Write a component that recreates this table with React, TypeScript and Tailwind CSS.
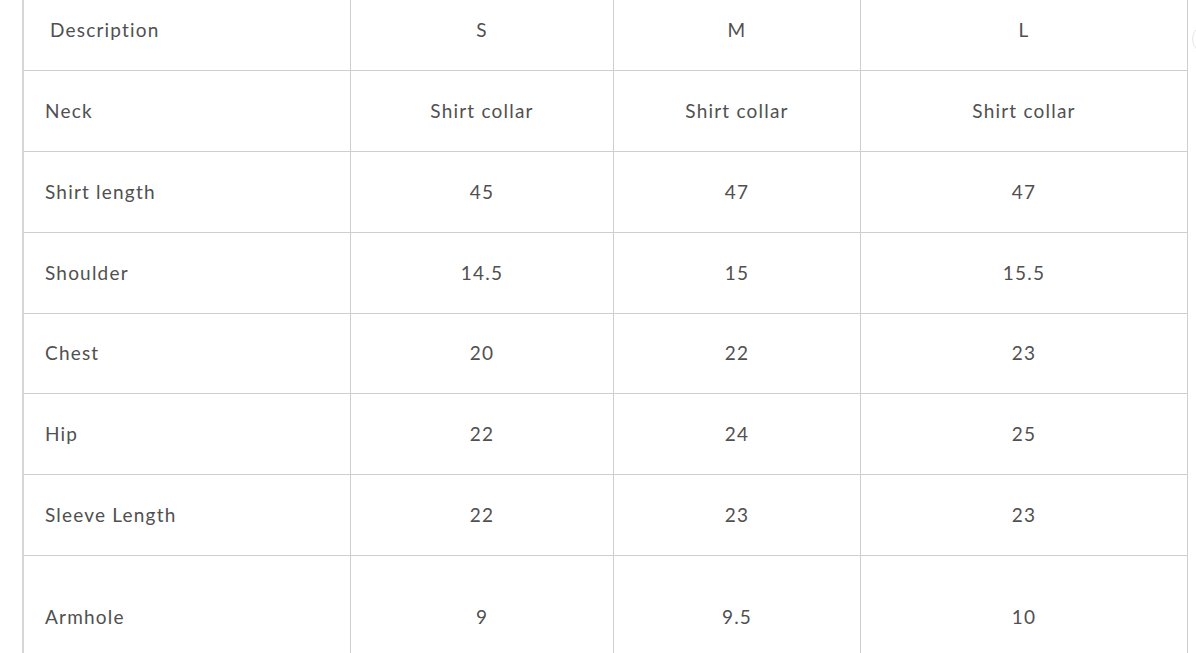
import React from "react";

const rows: [string, string, string, string, string][] = [
  ["Neck", "Shirt collar", "Shirt collar", "Shirt collar", "h-[81px]"],
  ["Shirt length", "45", "47", "47", "h-[81px]"],
  ["Shoulder", "14.5", "15", "15.5", "h-[81px]"],
  ["Chest", "20", "22", "23", "h-[80px]"],
  ["Hip", "22", "24", "25", "h-[81px]"],
  ["Sleeve Length", "22", "23", "23", "h-[81px]"],
];

export default function App() {
  return (
    <div
      className="relative w-[1196px] h-[653px] overflow-hidden bg-white text-[#505050]"
      style={{ fontFamily: 'Lato, "Noto Sans", sans-serif' }}
    >
      <div className="absolute left-[1192px] top-[24px] w-[30px] h-[30px] rounded-full border border-[#e6e6e6]" />
      <div className="ml-[22px] w-[1166px] border-l-2 border-r border-l-[#d6d6d6] border-r-[#cfcfcf]">
        <div className="grid grid-cols-[326px_263px_247px_327px] h-[71px] border-b border-[#cfcfcf] text-[19px] tracking-[1.2px]">
          <div className="flex items-center pl-[26px] pb-[10px]">Description</div>
          <div className="flex items-center justify-center border-l border-[#cfcfcf] pb-[10px]">S</div>
          <div className="flex items-center justify-center border-l border-[#cfcfcf] pb-[10px]">M</div>
          <div className="flex items-center justify-center border-l border-[#cfcfcf] pb-[10px]">L</div>
        </div>
        {rows.map((r) => (
          <div
            key={r[0]}
            className={`grid grid-cols-[326px_263px_247px_327px] ${r[4]} border-b border-[#cfcfcf] text-[19px] tracking-[1.2px]`}
          >
            <div className="flex items-center pl-[21px]">{r[0]}</div>
            <div className="flex items-center justify-center border-l border-[#cfcfcf]">{r[1]}</div>
            <div className="flex items-center justify-center border-l border-[#cfcfcf]">{r[2]}</div>
            <div className="flex items-center justify-center border-l border-[#cfcfcf]">{r[3]}</div>
          </div>
        ))}
        <div className="grid grid-cols-[326px_263px_247px_327px] h-[124px] border-b border-[#cfcfcf] text-[19px] tracking-[1.2px]">
          <div className="flex items-center pl-[21px]">Armhole</div>
          <div className="flex items-center justify-center border-l border-[#cfcfcf]">9</div>
          <div className="flex items-center justify-center border-l border-[#cfcfcf]">9.5</div>
          <div className="flex items-center justify-center border-l border-[#cfcfcf]">10</div>
        </div>
      </div>
    </div>
  );
}
